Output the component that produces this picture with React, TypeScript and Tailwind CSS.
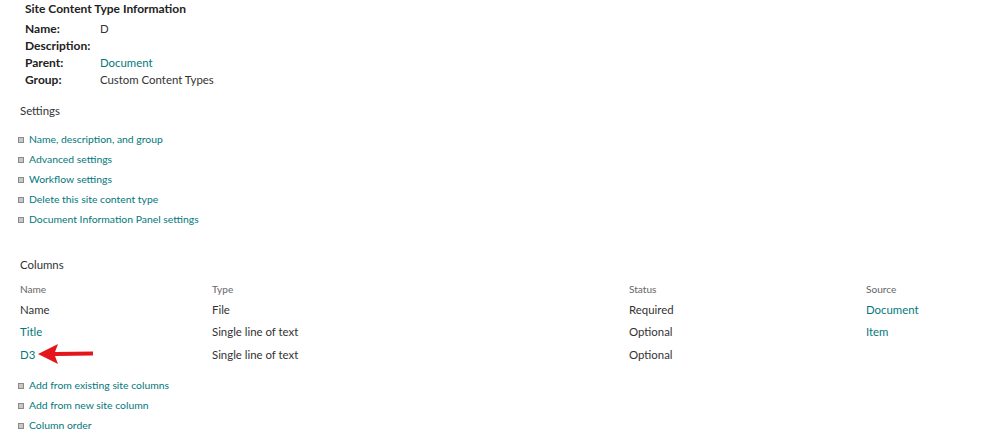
import React from 'react';

const link = 'text-[#03787c]';
const font = { fontFamily: 'Lato, "Open Sans", sans-serif' };

const settings = [
  'Name, description, and group',
  'Advanced settings',
  'Workflow settings',
  'Delete this site content type',
  'Document Information Panel settings',
];

const actions = ['Add from existing site columns', 'Add from new site column', 'Column order'];

const rows = [
  { name: 'Name', nameLink: false, type: 'File', status: 'Required', source: 'Document' },
  { name: 'Title', nameLink: true, type: 'Single line of text', status: 'Optional', source: 'Item' },
  { name: 'D3', nameLink: true, type: 'Single line of text', status: 'Optional', source: '', arrow: true },
];

function Bullet() {
  return <span className="inline-block w-[6px] h-[6px] border border-[#8a8a8a] bg-[#c8c8c8] mr-[5px] shrink-0" />;
}

function LinkList({ items }: { items: string[] }) {
  return (
    <ul className="pl-[18px] text-[10.4px]">
      {items.map(t => (
        <li key={t} className="flex items-center h-[20px]">
          <Bullet />
          <span className={link}>{t}</span>
        </li>
      ))}
    </ul>
  );
}

function Arrow() {
  return (
    <svg width="56" height="22" viewBox="0 0 56 22" className="ml-[3px]">
      <polygon points="0,11 20,1 17,9 55,8.5 55,12.5 17,13 20,21" fill="#e3161b" />
    </svg>
  );
}

export default function App() {
  return (
    <div className="w-[998px] h-[431px] bg-white overflow-hidden text-[11.4px] text-[#333]" style={font}>
      <div className="pl-[25px] pt-[1px] text-[12px]">
        <h2 className="font-bold text-[#222] leading-[15px] h-[19px]">Site Content Type Information</h2>
        <div className="grid grid-cols-[75px_1fr] leading-[17px]">
          <span className="font-bold text-[#222]">Name:</span><span className="text-[11.4px]">D</span>
          <span className="font-bold text-[#222]">Description:</span><span></span>
          <span className="font-bold text-[#222]">Parent:</span><span className={`text-[11.4px] ${link}`}>Document</span>
          <span className="font-bold text-[#222]">Group:</span><span className="text-[11.4px]">Custom Content Types</span>
        </div>
      </div>

      <div className="pl-[20px] mt-[14px] h-[28px]">Settings</div>
      <LinkList items={settings} />

      <div className="pl-[20px] mt-[26px] h-[24px]">Columns</div>
      <div className="grid grid-cols-[192px_417px_237px_1fr] pl-[20px]">
        <span className="text-[10.1px] text-[#666] h-[18px] leading-[18px]">Name</span>
        <span className="text-[10.1px] text-[#666] leading-[18px]">Type</span>
        <span className="text-[10.1px] text-[#666] leading-[18px]">Status</span>
        <span className="text-[10.1px] text-[#666] leading-[18px]">Source</span>
        {rows.map(r => (
          <React.Fragment key={r.name}>
            <span className={`flex items-center h-[22.5px] ${r.nameLink ? link : ''}`}>
              {r.name}
              {r.arrow && <Arrow />}
            </span>
            <span className="h-[22.5px] flex items-center">{r.type}</span>
            <span className="h-[22.5px] flex items-center">{r.status}</span>
            <span className={`h-[22.5px] flex items-center ${link}`}>{r.source}</span>
          </React.Fragment>
        ))}
      </div>
      <div className="mt-[10px]">
        <LinkList items={actions} />
      </div>
    </div>
  );
}
